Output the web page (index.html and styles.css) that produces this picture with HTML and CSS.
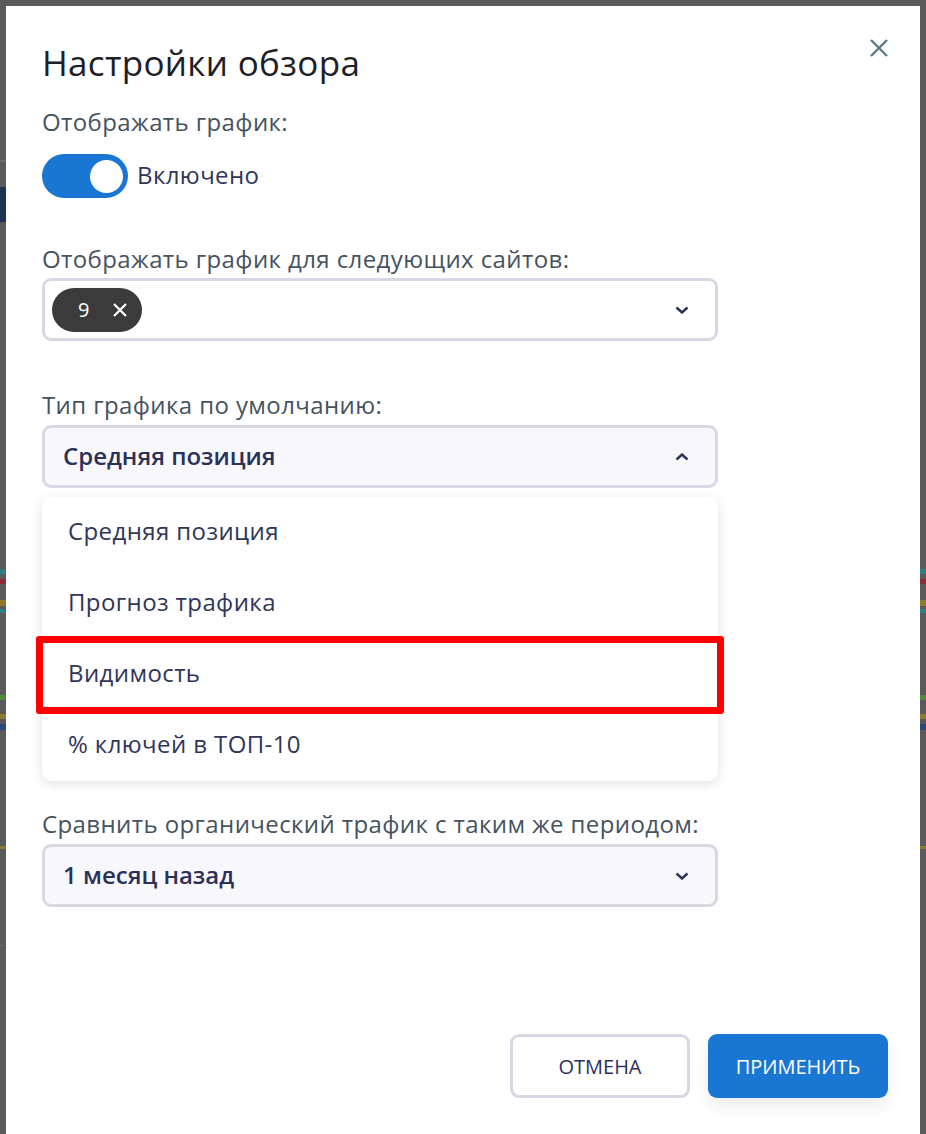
FILE: index.html
```html
<!DOCTYPE html>
<html lang="ru">
<head>
  <meta charset="UTF-8">
  <title>Настройки обзора</title>
  <link rel="stylesheet" href="styles.css">
</head>
<body>
  <div class="modal">
    <div class="modal-head">
      <h2 class="modal-title">Настройки обзора</h2>
      <button class="close-btn" aria-label="Закрыть">
        <svg width="20" height="20" viewBox="0 0 20 20"><path d="M2 2L18 18M18 2L2 18" stroke="#5a7886" stroke-width="2.4" fill="none"/></svg>
      </button>
    </div>

    <p class="label label-first">Отображать график:</p>
    <div class="switch-row">
      <span class="switch"><span class="knob"></span></span>
      <span class="switch-text">Включено</span>
    </div>

    <p class="label label-sites">Отображать график для следующих сайтов:</p>
    <div class="select">
      <span class="chip">9
        <svg width="16" height="16" viewBox="0 0 16 16"><path d="M2 2L14 14M14 2L2 14" stroke="#fff" stroke-width="2.2" fill="none"/></svg>
      </span>
      <svg class="chev" width="14" height="8" viewBox="0 0 14 8"><path d="M1.5 1.5L7 6.5L12.5 1.5" stroke="#2b3158" stroke-width="2.4" fill="none"/></svg>
    </div>

    <p class="label label-type">Тип графика по умолчанию:</p>
    <div class="select filled">
      <span class="value">Средняя позиция</span>
      <svg class="chev" width="14" height="8" viewBox="0 0 14 8"><path d="M1.5 6.5L7 1.5L12.5 6.5" stroke="#2b3158" stroke-width="2.4" fill="none"/></svg>
    </div>
    <ul class="menu">
      <li>Средняя позиция</li>
      <li>Прогноз трафика</li>
      <li class="marked">Видимость</li>
      <li>% ключей в ТОП-10</li>
    </ul>

    <p class="label label-compare">Сравнить органический трафик с таким же периодом:</p>
    <div class="select filled">
      <span class="value">1 месяц назад</span>
      <svg class="chev" width="14" height="8" viewBox="0 0 14 8"><path d="M1.5 1.5L7 6.5L12.5 1.5" stroke="#2b3158" stroke-width="2.4" fill="none"/></svg>
    </div>

    <div class="modal-foot">
      <button class="btn btn-cancel">ОТМЕНА</button>
      <button class="btn btn-apply">ПРИМЕНИТЬ</button>
    </div>
  </div>
</body>
</html>
```

FILE: styles.css
```css
html, body {
  margin: 0;
  height: 100%;
}
body {
  /* page behind the overlay, only a thin edge of it shows */
  background:
    linear-gradient(to bottom, transparent 0 160px, #6a6a6a 160px 162px, transparent 162px 187px, #1f3350 187px 222px, transparent 222px 945px, #6a6a6a 945px 946px, transparent 946px) left top / 6px 100% no-repeat,
    linear-gradient(to bottom, #5a5a5a 0 569px, #2e7f80 569px 574px, #5a5a5a 574px 579px, #8a2a35 579px 584px, #5a5a5a 584px 600px, #8d7a2e 600px 606px, #5a5a5a 606px 609px, #2e7f80 609px 613px, #5a5a5a 613px 695px, #4e8a3a 695px 700px, #5a5a5a 700px 714px, #8d7a2e 714px 719px, #5a5a5a 719px 724px, #2b4a7a 724px 730px, #5a5a5a 730px 846px, #8d7a2e 846px 849px, #5a5a5a 849px);
  font-family: 'Open Sans', sans-serif;
  overflow: hidden;
}
.modal {
  background: #fff;
  margin: 6px 6px 0 6px;
  height: 1128px;
  box-sizing: border-box;
  padding: 35px 32px 0 36px;
}
.modal-head {
  display: flex;
  justify-content: space-between;
  align-items: flex-start;
}
.modal-title {
  margin: 0;
  font-size: 35px;
  line-height: 44px;
  letter-spacing: 0.3px;
  font-weight: 400;
  color: #1d2127;
}
.close-btn {
  background: none;
  border: none;
  padding: 0;
  margin: -3px -1px 0 0;
  cursor: pointer;
  display: flex;
}
.label {
  margin: 0;
  font-size: 24px;
  line-height: 30px;
  letter-spacing: 0.4px;
  color: #46535e;
}
.label-first { margin-top: 22px; }
.label-sites { margin-top: 46px; }
.label-type { margin-top: 49px; }
.label-compare { margin-top: 28px; }

.switch-row {
  display: flex;
  align-items: center;
  gap: 9px;
  margin-top: 17px;
}
.switch {
  width: 86px;
  height: 44px;
  border-radius: 22px;
  background: #1976d2;
  display: flex;
  align-items: center;
  justify-content: flex-end;
  padding-right: 5px;
  box-sizing: border-box;
}
.knob {
  width: 33px;
  height: 33px;
  border-radius: 50%;
  background: #fff;
}
.switch-text {
  font-size: 24px;
  letter-spacing: 0.4px;
  color: #2f3659;
  padding-bottom: 3px;
}

.select {
  width: 676px;
  height: 63px;
  box-sizing: border-box;
  border: 3px solid #d6d9e4;
  border-radius: 9px;
  background: #fff;
  display: flex;
  align-items: center;
  padding: 0 26px 0 7px;
  margin-top: 4px;
}
.select.filled {
  background: #f8f8fc;
  padding-left: 18px;
  margin-top: 5px;
}
.chev {
  margin-left: auto;
}
.chip {
  height: 44px;
  width: 90px;
  box-sizing: border-box;
  border-radius: 22px;
  background: #3b3b3b;
  color: #fff;
  font-size: 20px;
  display: flex;
  align-items: center;
  padding-left: 26px;
  gap: 23px;
}
.value {
  font-size: 24px;
  font-weight: 600;
  color: #2b3158;
  padding-bottom: 3px;
}

.menu {
  list-style: none;
  margin: 9px 0 0 0;
  padding: 0;
  width: 676px;
  background: #fff;
  border-radius: 9px;
  box-shadow: 0 3px 12px rgba(0, 0, 0, 0.12);
}
.menu li {
  height: 71px;
  display: flex;
  align-items: center;
  padding-left: 26px;
  padding-bottom: 4px;
  box-sizing: border-box;
  font-size: 24px;
  letter-spacing: 0.4px;
  color: #2f3659;
  position: relative;
}
.menu li.marked::after {
  content: "";
  position: absolute;
  left: -6px;
  right: -6px;
  top: -3px;
  bottom: -4px;
  border: 7px solid #ff0000;
  border-radius: 3px;
}

.modal-foot {
  display: flex;
  justify-content: flex-end;
  gap: 18px;
  margin-top: 127px;
}
.btn {
  width: 180px;
  height: 64px;
  border-radius: 9px;
  font-family: 'Open Sans', sans-serif;
  font-size: 20px;
  cursor: pointer;
}
.btn-cancel {
  background: #fff;
  border: 3px solid #d6d9e4;
  color: #2b3158;
}
.btn-apply {
  background: #1976d2;
  border: none;
  color: #fff;
  box-shadow: 0 8px 16px rgba(0, 0, 0, 0.08);
}
```
